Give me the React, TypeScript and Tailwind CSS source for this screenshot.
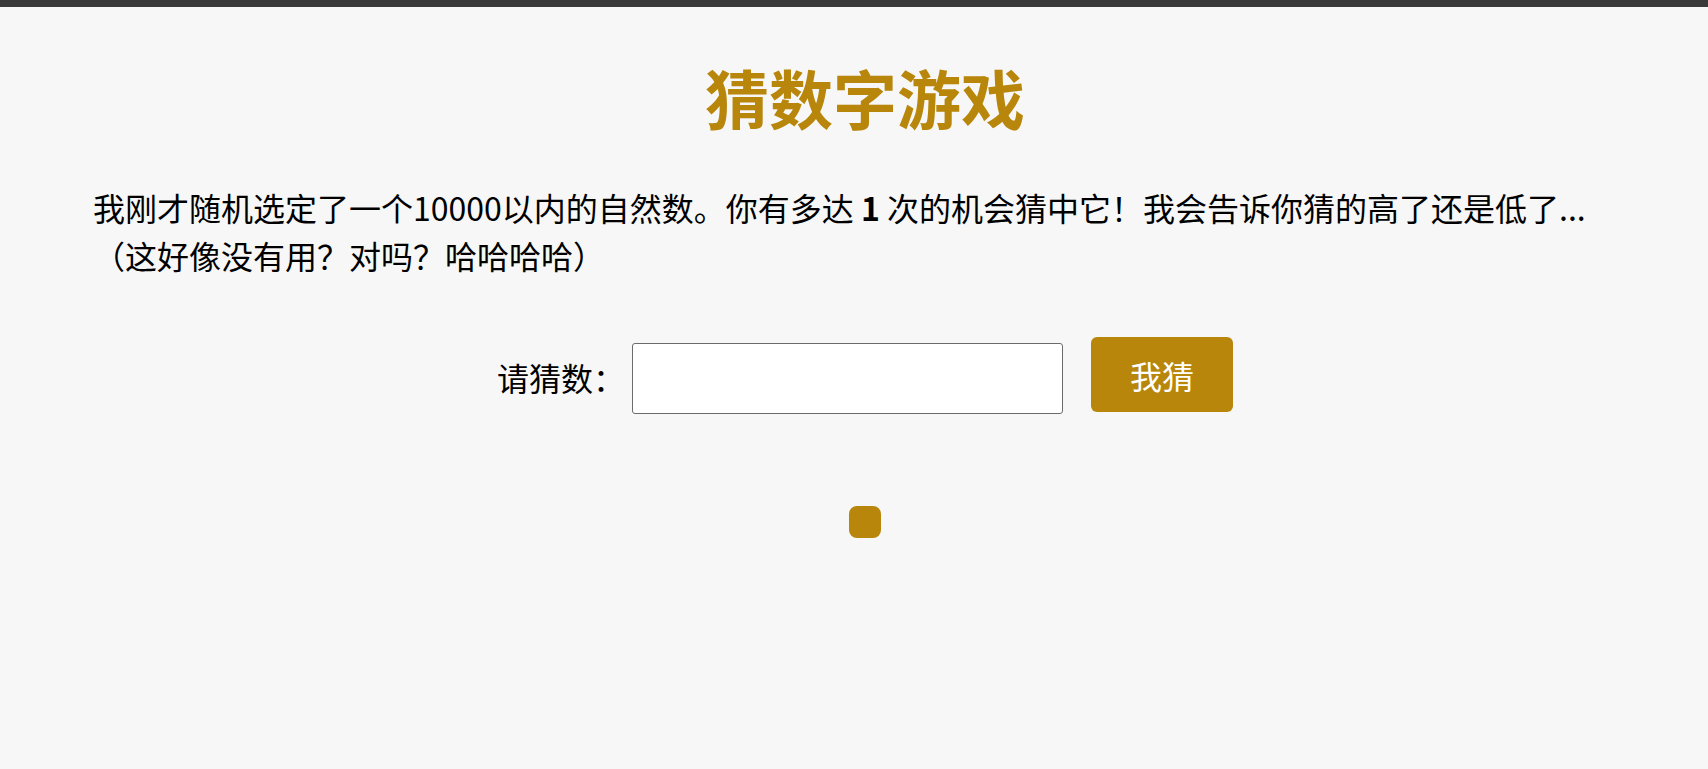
export default function App() {
  return (
    <div className="min-h-screen bg-[#f7f7f7] font-['Noto_Sans_CJK_SC','Noto_Sans',sans-serif] text-black">
      <div className="h-[7px] bg-[#3a3a3a]" />
      <main className="pl-[93px] pr-[71px]">
        <h1 className="mt-[41px] text-center text-[64px] font-bold leading-normal text-[#b8860b]">
          猜数字游戏
        </h1>
        <p className="mt-[39px] text-[32px] leading-normal">
          我刚才随机选定了一个10000以内的自然数。你有多达 <b>1</b> 次的机会猜中它！我会告诉你猜的高了还是低了...（这好像没有用？对吗？哈哈哈哈）
        </p>

        <div className="mt-[58px] flex items-start justify-center">
          <label htmlFor="guess" className="mt-[16px] text-[32px] leading-normal">
            请猜数：
          </label>
          <input
            id="guess"
            type="text"
            className="ml-[7px] mt-[6px] h-[71px] w-[431px] rounded-[3px] border border-[#6b6b6b] bg-white px-2 text-[32px] outline-none"
          />
          <button
            type="button"
            className="ml-[28px] h-[75px] w-[142px] rounded-md bg-[#b8860b] text-[32px] leading-normal text-white"
          >
            我猜
          </button>
        </div>

        <div className="mx-auto mt-[92px] size-8 rounded-lg bg-[#b8860b]" />
      </main>
    </div>
  );
}
